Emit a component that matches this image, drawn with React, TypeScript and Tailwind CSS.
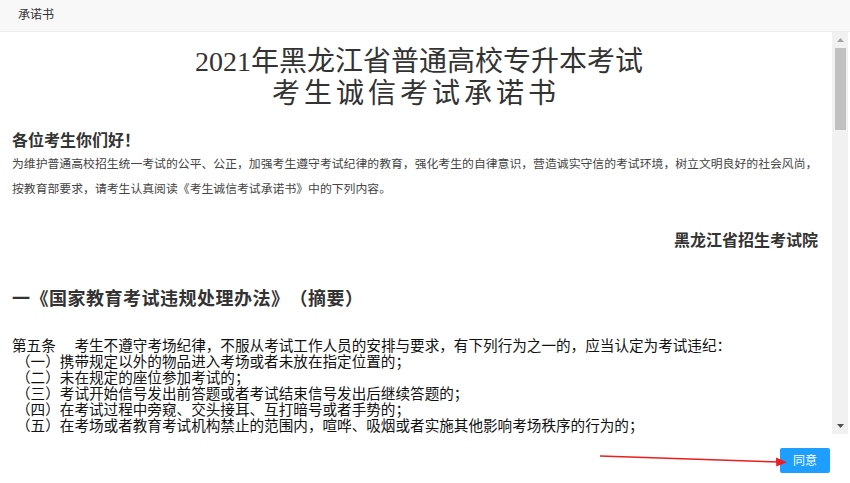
const sans = "font-['Liberation_Sans','Noto_Sans_CJK_SC',sans-serif]";

const rules = [
  "（一）携带规定以外的物品进入考场或者未放在指定位置的；",
  "（二）未在规定的座位参加考试的；",
  "（三）考试开始信号发出前答题或者考试结束信号发出后继续答题的；",
  "（四）在考试过程中旁窥、交头接耳、互打暗号或者手势的；",
  "（五）在考场或者教育考试机构禁止的范围内，喧哗、吸烟或者实施其他影响考场秩序的行为的；",
];

function Scrollbar() {
  return (
    <div className="flex w-[16px] shrink-0 flex-col items-center bg-[#f1f1f1]">
      <div className="flex h-[16px] w-full items-center justify-center">
        <svg width="7" height="4" viewBox="0 0 7 4">
          <path d="M0 4 L3.5 0 L7 4 Z" fill="#a3a3a3" />
        </svg>
      </div>
      <div className="h-[82px] w-[11px] bg-[#c1c1c1]" />
      <div className="flex-1" />
      <div className="flex h-[16px] w-full items-center justify-center">
        <svg width="7" height="4" viewBox="0 0 7 4">
          <path d="M0 0 L7 0 L3.5 4 Z" fill="#505050" />
        </svg>
      </div>
    </div>
  );
}

export default function App() {
  return (
    <div className={`relative h-[483px] w-[850px] overflow-hidden bg-white ${sans}`}>
      <div className="h-[32px] border-b border-[#ececec] bg-[#f8f8f8] px-[18px] text-[12px] leading-[31px] text-[#333]">
        承诺书
      </div>

      <div className="flex h-[402px] pr-[2px]">
        <div className="flex-1 overflow-hidden px-[12px] text-[#333] [text-spacing-trim:space-all]">
          <div className="mt-[14px] text-center font-['Liberation_Serif','Noto_Sans_CJK_SC',serif] text-[28px] leading-[32px] text-[#333]">
            <p className="pl-[6px]">2021年黑龙江省普通高校专升本考试</p>
            <p className="tracking-[4px]">考生诚信考试承诺书</p>
          </div>

          <p className="mt-[21px] text-[16px] font-bold leading-[20px] text-[#333]">各位考生你们好！</p>
          <p className="mt-[1px] text-[11.85px] leading-[25px] text-[#444]">
            为维护普通高校招生统一考试的公平、公正，加强考生遵守考试纪律的教育，强化考生的自律意识，营造诚实守信的考试环境，树立文明良好的社会风尚，
          </p>
          <p className="text-[11.85px] leading-[25px] text-[#444]">
            按教育部要求，请考生认真阅读《考生诚信考试承诺书》中的下列内容。
          </p>

          <p className="mt-[29px] pr-[2px] text-right text-[16px] font-bold leading-[20px] text-[#333]">黑龙江省招生考试院</p>

          <p className="mt-[37px] text-[18px] font-bold leading-[22px] tracking-[0.5px] text-[#333]">一《国家教育考试违规处理办法》（摘要）</p>

          <div className="mt-[28px] text-[14.6px] leading-[16px] text-[#111]">
            <p>第五条　 考生不遵守考场纪律，不服从考试工作人员的安排与要求，有下列行为之一的，应当认定为考试违纪：</p>
            {rules.map((r) => (
              <p key={r} className="pl-[4px]">
                {r}
              </p>
            ))}
          </div>
        </div>
        <Scrollbar />
      </div>

      <div className="flex justify-end pr-[20px] pt-[14px]">
        <button
          type="button"
          className="h-[25px] w-[50px] rounded-[2px] bg-[#1e9fff] text-[12px] text-white"
        >
          同意
        </button>
      </div>

      <svg className="pointer-events-none absolute left-0 top-0" width="850" height="483">
        <line x1="600" y1="456" x2="780" y2="462" stroke="#ee1c1c" strokeWidth="1.5" />
        <path d="M787 462.3 L776 457.5 L776.3 466.5 Z" fill="#ee1c1c" />
      </svg>
    </div>
  );
}
